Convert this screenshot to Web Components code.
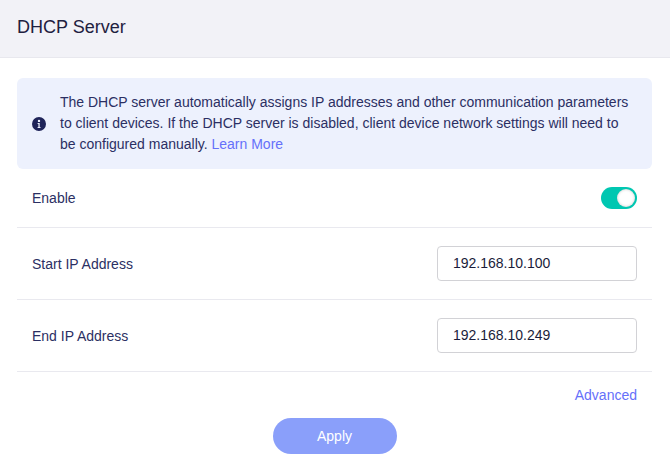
<!DOCTYPE html>
<html lang="en">
<head>
<meta charset="utf-8">
<title>DHCP Server</title>
<style>
  html, body { margin: 0; height: 465px; overflow: hidden; background: #fff; }
  body { font-family: "Liberation Sans", Arial, sans-serif; font-size: 14px; color: #24274f; }
</style>
</head>
<body>
<dhcp-page></dhcp-page>

<template id="page-header">
  <style>
    :host { display: flex; align-items: center; box-sizing: border-box; height: 58px; padding: 0 17px 3px;
      background: #f2f2f7; border-bottom: 1px solid #e8e8ee; font-size: 18px; color: #1f2140; }
  </style>
  <slot></slot>
</template>

<template id="info-banner">
  <style>
    :host { display: flex; align-items: center; gap: 14px; box-sizing: border-box; height: 91px; padding: 0 15px;
      background: #edf1fd; border-radius: 6px; line-height: 21px; color: #2b2f63; }
    svg { flex: none; width: 14px; height: 14px; }
    ::slotted(a) { color: #6570fa; text-decoration: none; }
  </style>
  <svg viewBox="0 0 14 14" aria-hidden="true">
    <path fill="#1f2459" fill-rule="evenodd" d="M7 0a7 7 0 1 1 0 14A7 7 0 0 1 7 0ZM5.6 5.9v1.1h.8v3h-.8v1.1h2.9V10h-.8V5.9ZM7 2.7a1.2 1.2 0 1 0 0 2.4 1.2 1.2 0 0 0 0-2.4Z"/>
  </svg>
  <div><slot></slot></div>
</template>

<template id="form-row">
  <style>
    :host { display: flex; align-items: center; justify-content: space-between; box-sizing: border-box;
      height: 72px; padding: 0 15px; border-bottom: 1px solid #e9e9ef; color: #2b2f63; }
    :host([compact]) { height: 59px; }
  </style>
  <slot name="label"></slot>
  <slot></slot>
</template>

<template id="toggle-switch">
  <style>
    :host { display: flex; align-items: center; justify-content: flex-end; box-sizing: border-box;
      width: 36px; height: 22px; padding: 0 2px; border-radius: 11px; background: #00c7b1; }
    span { width: 18px; height: 18px; border-radius: 50%; background: #fff; box-shadow: inset 0 0 3px rgba(0,0,0,.22); }
  </style>
  <span></span>
</template>

<template id="text-field">
  <style>
    :host { display: flex; align-items: center; box-sizing: border-box; width: 200px; height: 35px;
      padding: 0 15px; padding-bottom: 1px; border: 1px solid #d2d2d6; border-radius: 4px; color: #1a1c3a; }
  </style>
  <slot></slot>
</template>

<template id="apply-button">
  <style>
    :host { display: flex; align-items: center; justify-content: center; width: 124px; height: 36px;
      border-radius: 18px; background: #8a9ffa; color: #fff; }
  </style>
  <slot></slot>
</template>

<template id="dhcp-page">
  <style>
    :host { display: block; }
    main { display: flex; flex-direction: column; padding: 20px 18px 0 17px; }
    .more { display: flex; justify-content: flex-end; padding: 15px 15px 0 0; line-height: 16px; color: #6570fa; }
    .actions { display: flex; justify-content: center; padding-top: 15px; }
  </style>
  <page-header>DHCP Server</page-header>
  <main>
    <info-banner>The DHCP server automatically assigns IP addresses and other communication parameters to client devices. If the DHCP server is disabled, client device network settings will need to be configured manually. <a href="#">Learn More</a></info-banner>
    <form-row compact><span slot="label">Enable</span><toggle-switch></toggle-switch></form-row>
    <form-row><span slot="label">Start IP Address</span><text-field>192.168.10.100</text-field></form-row>
    <form-row><span slot="label">End IP Address</span><text-field>192.168.10.249</text-field></form-row>
    <div class="more">Advanced</div>
    <div class="actions"><apply-button>Apply</apply-button></div>
  </main>
</template>

<script>
  // every element just stamps its own template into an open shadow root
  for (const name of ['page-header', 'info-banner', 'form-row', 'toggle-switch', 'text-field', 'apply-button', 'dhcp-page']) {
    customElements.define(name, class extends HTMLElement {
      constructor() {
        super();
        this.attachShadow({ mode: 'open' });
        this.shadowRoot.appendChild(document.getElementById(name).content.cloneNode(true));
      }
    });
  }
</script>
</body>
</html>
